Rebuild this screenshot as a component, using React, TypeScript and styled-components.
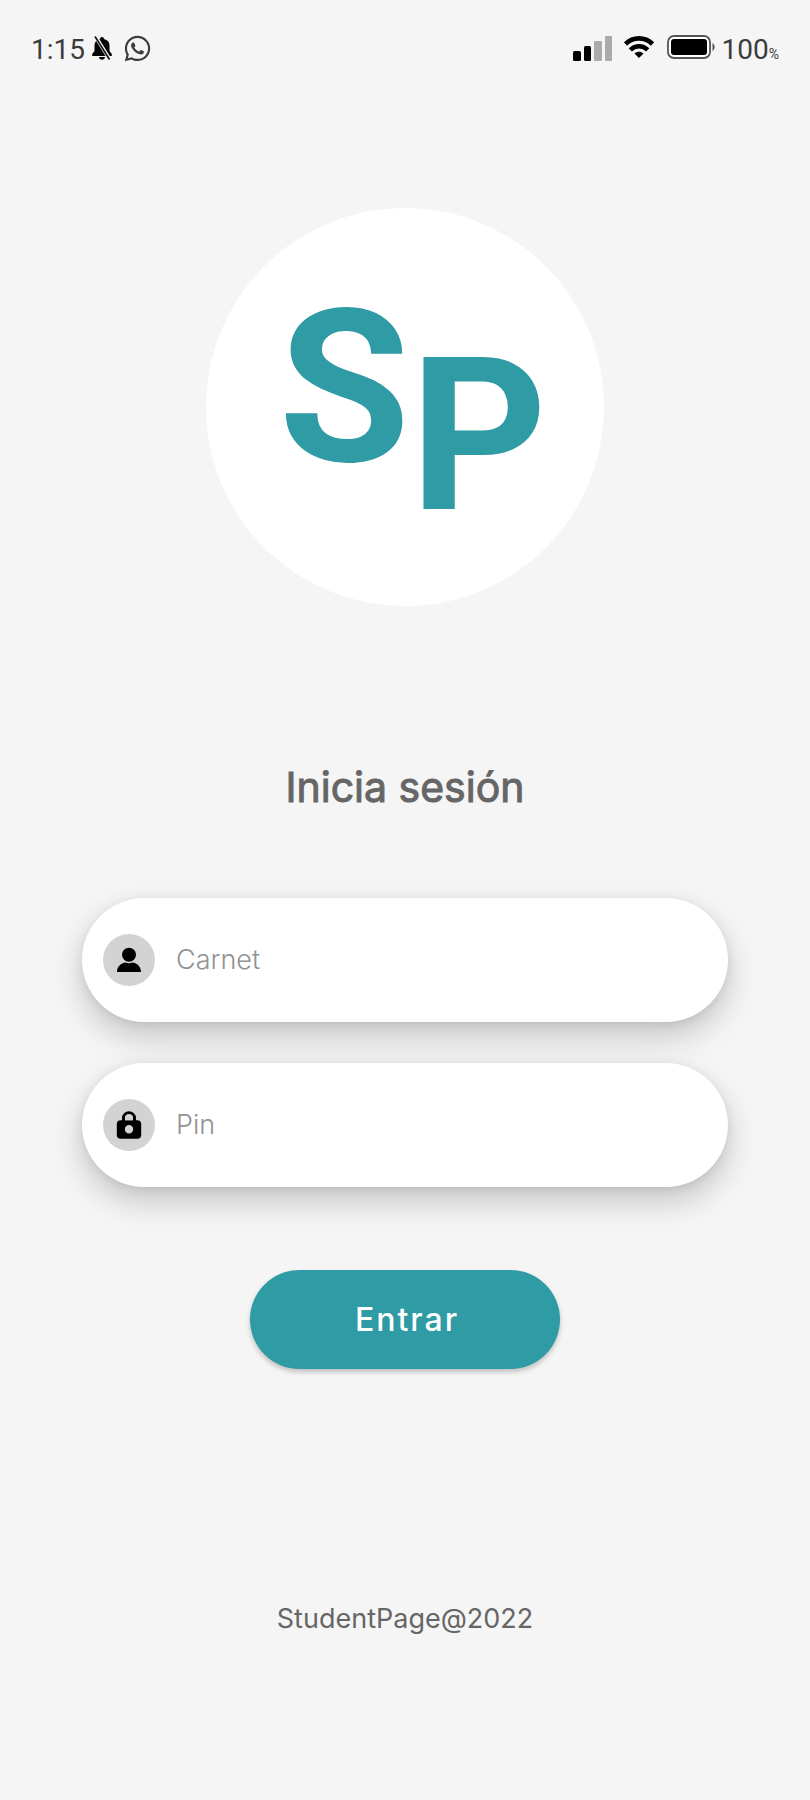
import React from "react";
import styled, { createGlobalStyle } from "styled-components";
import { FaWhatsapp } from "react-icons/fa";

const GlobalStyle = createGlobalStyle`
  *, *::before, *::after { box-sizing: border-box; }
  body {
    margin: 0;
    background: #f5f5f5;
    color: #666;
    font-family: Inter, "Liberation Sans", sans-serif;
  }
`;

const Screen = styled.div`
  display: flex;
  flex-direction: column;
  min-height: 100vh;
`;

const StatusBar = styled.header`
  display: flex;
  align-items: center;
  justify-content: space-between;
  height: 96px;
  padding: 0 31px;
  color: #3c3c3c;
  font: 400 28px/32px Roboto, sans-serif;
`;

const StatusGroup = styled.div<{ $gap: number }>`
  display: flex;
  align-items: center;
  gap: ${(p) => p.$gap}px;

  svg { display: block; }
`;

const StatusText = styled.span`
  display: flex;
  align-items: baseline;
  padding-top: 4px;
`;

const Percent = styled.small`
  font-size: 14px;
  line-height: 16px;
`;

const Main = styled.main`
  display: flex;
  flex-direction: column;
  align-items: center;
  padding: 112px 82px 0;
`;

const Logo = styled.div`
  display: flex;
  align-items: flex-start;
  justify-content: center;
  width: 398px;
  height: 398px;
  padding: 54px 0 0 16px;
  border-radius: 50%;
  background: #fff;
  color: #2f9ba5;
  font-family: Roboto, sans-serif;
  font-size: 213px;
  font-weight: 700;
  line-height: 252px;
`;

const LogoLetter = styled.span<{ $drop?: number }>`
  padding-top: ${(p) => p.$drop ?? 0}px;
`;

const Title = styled.h1`
  margin: 155px 0 85px;
  font-size: 41px;
  font-weight: 400;
  line-height: 52px;
  -webkit-text-stroke: 1px currentColor;
`;

const Form = styled.form`
  display: flex;
  flex-direction: column;
  align-items: center;
  gap: 41px;
  width: 100%;
`;

const Field = styled.label`
  display: flex;
  align-items: center;
  gap: 21px;
  width: 100%;
  height: 124px;
  padding: 0 21px;
  border-radius: 62px;
  background: #fff;
  box-shadow: 0 14px 32px rgba(0, 0, 0, 0.2), 0 2px 10px rgba(0, 0, 0, 0.08);
`;

const FieldIcon = styled.span`
  display: flex;
  flex: none;
  align-items: center;
  justify-content: center;
  width: 52px;
  height: 52px;
  border-radius: 50%;
  background: #d3d3d3;
`;

const Input = styled.input`
  flex: 1;
  min-width: 0;
  padding: 0;
  border: 0;
  outline: 0;
  background: transparent;
  color: #444;
  font: 300 27px/36px Inter, sans-serif;

  &::placeholder { color: #929292; opacity: 1; }
`;

const Submit = styled.button`
  width: 310px;
  height: 99px;
  margin-top: 42px;
  padding: 0 0 0 4px;
  border: 0;
  border-radius: 50px;
  background: #2f9ba5;
  box-shadow: 0 3px 5px rgba(0, 0, 0, 0.22);
  color: #fff;
  font: 500 32px/40px Inter, sans-serif;
  letter-spacing: 2px;
  cursor: pointer;
`;

const Footer = styled.footer`
  margin-top: 232px;
  text-align: center;
  font-size: 27px;
  line-height: 36px;
`;

const BellOff = () => (
  <svg width="20" height="24" viewBox="0 0 20 24" aria-hidden="true">
    <path d="M10 1c1.300 0 2 .8 2 2 3.500.8 5.500 3.300 5.500 6.500V15l2.300 3v2H.2v-2l2.300-3V9.500C2.500 6.300 4.500 3.800 8 3c0-1.200.7-2 2-2zM7 21h6c0 3.600-6 3.600-6 0z" fill="#050505" />
    <path d="M3.500 .5 17.500 23" stroke="#f5f5f5" strokeWidth="3.600" />
    <path d="M3 .5 17.500 23.500" stroke="#111" strokeWidth="1.600" />
  </svg>
);

const Signal = () => (
  <svg width="40" height="26" viewBox="0 0 40 26" aria-hidden="true">
    <rect x="0" y="16" width="8" height="10" rx="1.500" fill="#000" />
    <rect x="11" y="11" width="7" height="15" rx="1.500" fill="#000" />
    <rect x="21" y="6" width="8" height="20" rx="1" fill="#aaa" />
    <rect x="32" y="1" width="7" height="25" rx="1" fill="#aaa" />
  </svg>
);

const Wifi = () => (
  <svg width="32" height="26" viewBox="0 0 32 26" aria-hidden="true">
    <g fill="none" stroke="#000" strokeWidth="4.600">
      <path d="M1.500 9c7.500-7.500 19.500-7.500 27 0" />
      <path d="M6.300 14.800c5-4.800 12.400-4.800 17.400 0" />
    </g>
    <path d="M10.500 18.500c2.600-2.400 6.400-2.400 9 0L15 23z" fill="#000" />
  </svg>
);

const Battery = () => (
  <svg width="49" height="26" viewBox="0 0 49 26" aria-hidden="true">
    <rect x="1" y="1" width="42" height="22" rx="6" fill="#fff" stroke="#555" strokeWidth="1.800" />
    <rect x="4" y="4" width="36" height="16" rx="3" fill="#000" />
    <path d="M45.500 8c2.800 1.500 2.800 6.500 0 8z" fill="#555" />
  </svg>
);

const PersonIcon = () => (
  <svg width="26" height="26" viewBox="0 0 26 26" aria-hidden="true">
    <circle cx="13" cy="7.800" r="7" />
    <path d="M1 25c0-5.500 4-9 8.500-9.500 2 1 5 1 7 0C21 16 25 19.500 25 25z" />
  </svg>
);

const LockIcon = () => (
  <svg width="26" height="28" viewBox="0 0 26 28" aria-hidden="true">
    <path d="M7.500 12V7.300a5.500 5.500 0 0 1 11 0V12" fill="none" stroke="#000" strokeWidth="3" />
    <path
      fillRule="evenodd"
      d="M4.800 9.200h16.400a4 4 0 0 1 4 4v10.500a4 4 0 0 1-4 4H4.800a4 4 0 0 1-4-4V13.200a4 4 0 0 1 4-4zM13 14a4.200 4.200 0 1 0 0 8.400 4.200 4.200 0 0 0 0-8.400z"
    />
    <path d="M9 7.300a4 4 0 0 1 8 0v2H9z" fill="#d3d3d3" />
  </svg>
);

export default function App() {
  return (
    <Screen>
      <GlobalStyle />
      <StatusBar>
        <StatusGroup $gap={7}>
          <StatusText>1:15</StatusText>
          <StatusGroup $gap={11}>
            <BellOff />
            <FaWhatsapp size={29} />
          </StatusGroup>
        </StatusGroup>
        <StatusGroup $gap={6}>
          <StatusGroup $gap={11}>
            <Signal />
            <Wifi />
            <Battery />
          </StatusGroup>
          <StatusText>100<Percent>%</Percent></StatusText>
        </StatusGroup>
      </StatusBar>
      <Main>
        <Logo>
          <LogoLetter>S</LogoLetter>
          <LogoLetter $drop={48}>P</LogoLetter>
        </Logo>
        <Title>Inicia sesión</Title>
        <Form onSubmit={(e: React.FormEvent) => e.preventDefault()}>
          <Field>
            <FieldIcon><PersonIcon /></FieldIcon>
            <Input type="text" name="carnet" placeholder="Carnet" aria-label="Carnet" />
          </Field>
          <Field>
            <FieldIcon><LockIcon /></FieldIcon>
            <Input type="password" name="pin" placeholder="Pin" aria-label="Pin" />
          </Field>
          <Submit type="submit">Entrar</Submit>
        </Form>
      </Main>
      <Footer>StudentPage@2022</Footer>
    </Screen>
  );
}
